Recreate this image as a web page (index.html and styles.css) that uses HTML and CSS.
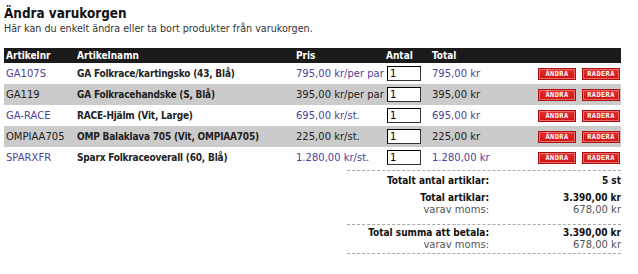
FILE: index.html
```html
<!DOCTYPE html>
<html>
<head>
    <title>Ändra varukorgen</title>
    <link rel="stylesheet" href="styles.css">
</head>
<body>
    <h1>Ändra varukorgen</h1>
    <p class="intro">Här kan du enkelt ändra eller ta bort produkter från varukorgen.</p>

    <table class="korg">
        <colgroup>
            <col class="c-nr">
            <col class="c-namn">
            <col class="c-pris">
            <col class="c-antal">
            <col class="c-total">
            <col class="c-knapp">
        </colgroup>
        <thead>
            <tr>
                <th>Artikelnr</th>
                <th>Artikelnamn</th>
                <th>Pris</th>
                <th>Antal</th>
                <th>Total</th>
                <th></th>
            </tr>
        </thead>
        <tbody>
            <tr>
                <td><a href="#">GA107S</a></td>
                <td class="namn">GA Folkrace/kartingsko (43, Blå)</td>
                <td class="pris">795,00 kr/per par</td>
                <td><input class="antal" type="text" value="1"></td>
                <td class="pris">795,00 kr</td>
                <td class="knappar"><button class="knapp">Ändra</button><button class="knapp">Radera</button></td>
            </tr>
            <tr class="gra">
                <td>GA119</td>
                <td class="namn">GA Folkracehandske (S, Blå)</td>
                <td>395,00 kr/per par</td>
                <td><input class="antal" type="text" value="1"></td>
                <td>395,00 kr</td>
                <td class="knappar"><button class="knapp">Ändra</button><button class="knapp">Radera</button></td>
            </tr>
            <tr>
                <td><a href="#">GA-RACE</a></td>
                <td class="namn">RACE-Hjälm (Vit, Large)</td>
                <td class="pris">695,00 kr/st.</td>
                <td><input class="antal" type="text" value="1"></td>
                <td class="pris">695,00 kr</td>
                <td class="knappar"><button class="knapp">Ändra</button><button class="knapp">Radera</button></td>
            </tr>
            <tr class="gra">
                <td>OMPIAA705</td>
                <td class="namn">OMP Balaklava 705 (Vit, OMPIAA705)</td>
                <td>225,00 kr/st.</td>
                <td><input class="antal" type="text" value="1"></td>
                <td>225,00 kr</td>
                <td class="knappar"><button class="knapp">Ändra</button><button class="knapp">Radera</button></td>
            </tr>
            <tr>
                <td><a href="#">SPARXFR</a></td>
                <td class="namn">Sparx Folkraceoverall (60, Blå)</td>
                <td class="pris">1.280,00 kr/st.</td>
                <td><input class="antal" type="text" value="1"></td>
                <td class="pris">1.280,00 kr</td>
                <td class="knappar"><button class="knapp">Ändra</button><button class="knapp">Radera</button></td>
            </tr>
        </tbody>
    </table>

    <div class="summering">
        <div class="antal-summa">
            <div class="rad fet"><span>Totalt antal artiklar:</span><span>5 st</span></div>
        </div>
        <div class="delsumma">
            <div class="rad fet"><span>Total artiklar:</span><span>3.390,00 kr</span></div>
            <div class="rad"><span>varav moms:</span><span>678,00 kr</span></div>
        </div>
        <div class="slutsumma">
            <div class="rad fet"><span>Total summa att betala:</span><span>3.390,00 kr</span></div>
            <div class="rad"><span>varav moms:</span><span>678,00 kr</span></div>
        </div>
    </div>
</body>
</html>
```

FILE: styles.css
```css
body {
    margin: 0;
    padding: 4px;
    font-family: "DejaVu Sans", Verdana, sans-serif;
    font-size: 10px;
    color: #222;
    background: #fff;
}

h1, th, .namn, .fet {
    font-family: "DejaVu Sans Condensed", "DejaVu Sans", Tahoma, sans-serif;
    font-stretch: condensed;
}

h1 {
    margin: 1px 0 0 0;
    font-size: 13.4px;
    line-height: 18px;
    color: #111;
}

.intro {
    margin: 0 0 13px 0;
    font-size: 9.6px;
    line-height: 12px;
    color: #333;
}

a {
    color: #4e3f9a;
    text-decoration: none;
}

/* varukorgstabellen */
.korg {
    width: 617px;
    border-collapse: collapse;
    table-layout: fixed;
}

.c-nr    { width: 71px; }
.c-namn  { width: 219px; }
.c-pris  { width: 90px; }
.c-antal { width: 46px; }
.c-total { width: 100px; }

.korg th {
    background: #1b1b1b;
    color: #fff;
    text-align: left;
    font-size: 10px;
    font-weight: bold;
    height: 15px;
    padding: 0 0 0 2px;
}

.korg td {
    height: 21px;
    padding: 0 0 0 2px;
    font-size: 10px;
    white-space: nowrap;
}

.korg tr.gra td {
    background: #cbcbcb;
}

.korg td.namn {
    font-weight: bold;
    font-size: 10px;
    letter-spacing: -0.2px;
}

.korg td.pris {
    color: #4e3f9a;
}

.antal {
    width: 34px;
    height: 15px;
    box-sizing: border-box;
    margin: 0 0 0 1px;
    padding: 0 2px;
    border: 1px solid #333;
    border-top-color: #000;
    border-left-color: #000;
    background: #fff;
    font-family: "DejaVu Sans", Verdana, sans-serif;
    font-size: 10px;
    vertical-align: middle;
}

.knappar {
    text-align: right;
    padding-right: 4px !important;
}

.knapp {
    width: 38px;
    height: 12px;
    margin-left: 6px;
    padding: 0;
    border: 1px solid #a80f0f;
    box-shadow: inset 0 0 0 1px #f06a6a;
    background: linear-gradient(#e83030, #cc1212);
    color: #fff;
    font-family: "DejaVu Sans Mono", monospace;
    font-size: 7px;
    font-weight: bold;
    letter-spacing: 0.4px;
    text-transform: uppercase;
    vertical-align: middle;
    line-height: 10px;
}

/* summering */
.summering {
    width: 274px;
    margin: 2px 0 0 343px;
    border-top: 1px dashed #aaa;
    border-bottom: 1px dashed #aaa;
}

.antal-summa {
    padding: 4px 0 5px 0;
}

.delsumma {
    padding: 0 0 9px 0;
}

.slutsumma {
    border-top: 1px dashed #aaa;
    padding: 2px 0 3px 0;
}

.rad {
    display: flex;
    line-height: 11px;
    color: #555;
    font-size: 10px;
}

.rad span:first-child {
    width: 142px;
    text-align: right;
}

.rad span:last-child {
    flex: 1;
    text-align: right;
}

.rad.fet {
    font-weight: bold;
    font-size: 10px;
    color: #111;
    line-height: 12px;
}
```
